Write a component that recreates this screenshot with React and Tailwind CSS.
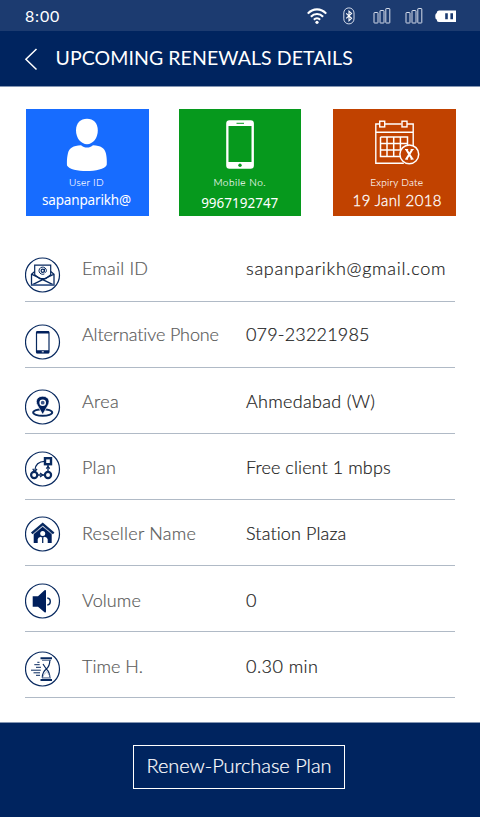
import React from "react";

const SignalIcon = () => (
  <svg width="18" height="18" viewBox="0 0 18 18" fill="none" stroke="#d5dcea" strokeWidth="1">
    <rect x="1" y="5.5" width="4" height="10.5" rx="0.5" />
    <rect x="7" y="3.5" width="4" height="12.5" rx="0.5" />
    <rect x="12.8" y="1.5" width="4" height="14.5" rx="0.5" />
  </svg>
);

const WifiIcon = () => (
  <svg width="20" height="17" viewBox="0 0 20 17" fill="none" stroke="#fff" strokeWidth="2.1">
    <path d="M.8 5.6C6-.1 14-.1 19.200 5.600" />
    <path d="M3.900 8.700c3.400-3.700 8.800-3.700 12.200 0" />
    <path d="M6.900 11.700c1.700-1.900 4.500-1.900 6.200 0" />
    <circle cx="10" cy="14.300" r="1.600" fill="#fff" stroke="none" />
  </svg>
);

const BluetoothIcon = () => (
  <svg width="12" height="18" viewBox="0 0 12 18" fill="none" stroke="#fff">
    <rect x=".8" y=".9" width="10.200" height="16" rx="5" stroke="#d5dcea" strokeWidth="1" />
    <path d="M3.200 6.300l5.400 5L6 13.700V4.100l2.600 2.300-5.400 5" strokeWidth="1.100" />
  </svg>
);

const BatteryIcon = () => (
  <svg width="22" height="13" viewBox="0 0 22 13">
    <path d="M4 .5h17v11.500H4Q1.700 12 1.700 9.500 .3 9 .3 7V5.500Q.3 3.500 1.700 3 1.700 .5 4 .5z" fill="#fff" />
    <path d="M10.200 3.200h2.600v6h-2.600zM15.400 3.200h2.600v6h-2.600z" fill="#1c3b70" />
  </svg>
);

const UserIcon = () => (
  <svg width="42" height="54" viewBox="0 0 42 54" fill="#fff">
    <path d="M21 .8C14.500 .8 10 5 10 12.500 10 20 15 26.200 21 26.200S31.800 20 31.800 12.500C31.800 5 27.500 .8 21 .8z" />
    <path d="M15 27.200c3.500 3.100 8.500 3.100 12 0 8 .3 11.500 2.800 12.800 7.800 .9 3.500 1.200 8 .9 12C37 55 5 55 1 47.500c-.3-4.500 .1-9 1-12.500 1.300-5 5-7.500 13-7.800z" />
  </svg>
);

const BigPhoneIcon = () => (
  <svg width="28" height="49" viewBox="0 0 28 49">
    <path fillRule="evenodd" fill="#fff" d="M3.500 .3h21A3.300 3.300 0 0 1 27.900 3.500v42a3.300 3.300 0 0 1-3.300 3.200h-21A3.300 3.300 0 0 1 .2 45.500v-42A3.300 3.300 0 0 1 3.500 .3zM2.500 6h23v36h-23z" />
    <path d="M10.500 3.300h7.500" stroke="#06991d" strokeWidth="1" />
    <circle cx="14" cy="45.300" r="1.700" fill="#06991d" />
  </svg>
);

const CalendarIcon = () => (
  <svg width="46" height="46" viewBox="0 0 46 46" fill="none" stroke="#fff" strokeWidth="1.400">
    <path d="M5.500 4H1.800v39.200h28M10.500 4H27.500M33 4h6.200v24M1.800 12.300h37.400" />
    <rect x="5.700" y="1.200" width="5" height="5.700" />
    <rect x="28" y="1.200" width="5" height="5.700" />
    <path d="M6.500 17h27v12M6.500 17v19.500h20M6.500 23.500h27M6.500 30h21M13 17v19.500M19.700 17v19.500M26.400 17v13" strokeWidth="1.500" />
    <circle cx="35.300" cy="34.300" r="9.400" fill="#c14200" strokeWidth="1.500" />
    <path d="M32.300 29.500l6 9.600M38.300 29.500l-6 9.600" strokeWidth="2" />
    <path d="M31 29.500h3.200M36.700 29.500h3M31 39.100h3M36.500 39.100h3.200" strokeWidth="1" />
  </svg>
);

const Ring = ({ children }) => (
  <svg width="36" height="36" viewBox="0.5 0 36 36" fill="none" stroke="#08295f">
    <circle cx="18" cy="18" r="17" strokeWidth="1.200" />
    {children}
  </svg>
);

const MailGlyph = () => (
  <Ring>
    <path d="M10.200 8.200h16v9.500l-5 4h-6l-5-4z" strokeWidth="1.200" />
    <path d="M10.200 14.500L7 17.200v11h22.500v-11l-3.300-2.700M7 17.200l22.500 11M29.500 17.200L7 28.200" strokeWidth="1.300" />
    <path d="M7 28h22.500" stroke="#526d9b" strokeWidth="1.500" />
    <circle cx="18.200" cy="13.700" r="1.600" strokeWidth="1.200" />
    <path d="M20 11.700v3c.2 1.200 1.900 .8 1.900-1a3.700 3.600 0 1 0-2 3.200" strokeWidth="1" />
  </Ring>
);

const PhoneGlyph = () => (
  <Ring>
    <rect x="12" y="7.500" width="12.500" height="21.500" rx="1" stroke="#08295f" strokeWidth="1.200" />
    <path d="M12 7.200h12.500v2.300H12zM12 26.300h12.500v3H12z" fill="#001f5c" stroke="none" />
    <path d="M17.300 27.800h2" stroke="#fff" />
  </Ring>
);

const AreaGlyph = () => (
  <Ring>
    <ellipse cx="18.200" cy="23.500" rx="9.500" ry="3.300" strokeWidth="2" />
    <path d="M18.200 25.500l-5-8.700C9.500 10.500 14 7.200 18.200 7.200s8.700 3.300 5 9.600z" fill="#001f5c" stroke="#fff" strokeWidth=".7" />
    <circle cx="18.200" cy="13.700" r="2.600" fill="#3b568b" stroke="#fff" strokeWidth="1.400" />
  </Ring>
);

const PlanGlyph = () => (
  <Ring>
    <path d="M10.300 19.500C10.500 14 14.500 10.300 20 10.300M23.500 14v6M13.500 24h7" strokeWidth="1.300" />
    <path d="M8.300 17.800l1.700 3 2.500-2.800M15.500 22l2.800 2-2.800 2M21.800 17.700l1.700-2.200 1.700 2.200" strokeWidth="1.300" />
    <rect x="20.500" y="7.200" width="6" height="6" strokeWidth="2.400" />
    <circle cx="9.700" cy="24" r="3.100" strokeWidth="2.200" />
    <circle cx="23.500" cy="24" r="3.100" strokeWidth="2.200" />
  </Ring>
);

const HouseGlyph = () => (
  <Ring>
    <path d="M9.200 17.200l9-7 9 7v9.800H9.200z" fill="#001f5c" stroke="none" />
    <path d="M7.200 17.300l11-9.300 11 9.300" strokeWidth="2.300" />
    <path d="M9.300 17.800l8.900-7.300 8.900 7.300" stroke="#fff" strokeWidth=".6" />
    <circle cx="18.200" cy="17.400" r="2.500" fill="#fff" stroke="none" />
    <path d="M13.200 27.200v-4q.2-1.700 3-2.400l2 1.200 2-1.200q2.800 .7 3 2.400v4z" fill="#fff" stroke="none" />
    <path d="M18.200 22v5" strokeWidth="1.300" />
  </Ring>
);

const VolumeGlyph = () => (
  <Ring>
    <path d="M8.200 13.300h5.300L20 7.300q1.500-.8 1.500 .8v20.500q0 1.500-1.500 .7l-6.500-5.500H8.200z" fill="#001f5c" stroke="none" />
    <path d="M22.800 15c4 .5 4 6.500 0 7" strokeWidth="1.400" />
  </Ring>
);

const TimeGlyph = () => (
  <Ring>
    <path d="M16 7.200h11.500M16 29h11.500" strokeWidth="2" />
    <path d="M17.500 9.300h9M17.500 27h9" strokeWidth=".7" />
    <path d="M25.300 9.500c0 5-1 6.500-3.500 8.500 2.500 2 3.500 4.500 3.500 8.800M18.500 13l3.300 5c-2.500 2-4 4-4 8.700" strokeWidth="1.200" />
    <path d="M18.300 26.500c1-4 3-4.500 3.800-5.800 .7 1.500 3 2.300 3.500 5.800z" stroke="#8797b5" strokeWidth=".7" />
    <path d="M12.800 11.300H15M9.800 13.700h5.400M11.500 16.300h5M6.500 19.200h9.800M9 21.800h6.500M11.500 24.300h4" strokeWidth="1" />
  </Ring>
);

const cards = [
  {
    Icon: UserIcon, label: "User ID", value: "sapanparikh@",
    box: "ml-[26px] w-[123px] bg-[#176cff]", pic: "pt-[9px] pr-[2px] h-[66px]",
    labelCls: "tracking-[0.3px] pr-[2px]", valueCls: "font-['Noto_Sans',sans-serif] text-[13.500px] tracking-[-0.150px] pr-[2px]",
  },
  {
    Icon: BigPhoneIcon, label: "Mobile No.", value: "9967192747",
    box: "ml-[29.500px] w-[122.500px] bg-[#06991d]", pic: "pt-[11px] h-[66px]",
    labelCls: "tracking-[0.5px]", valueCls: "font-['Noto_Sans',sans-serif] text-[13.5px] tracking-[0px] mt-[3px]",
  },
  {
    Icon: CalendarIcon, label: "Expiry Date", value: "19 Janl 2018",
    box: "ml-[32px] w-[122.500px] bg-[#c14200]", pic: "pt-[11px] pl-[5px] h-[66px]",
    labelCls: "tracking-[0.25px] pl-[5px]", valueCls: "text-[15px] font-light [-webkit-text-stroke:0.3px] tracking-[0.4px] pl-[6px]",
  },
];

const rows = [
  { Icon: MailGlyph, label: "Email ID", value: "sapanparikh@gmail.com", icon: "pt-[20.5px]", l: "pt-[20px] tracking-[0.2px]", v: "pt-[20px] tracking-[0.740px]" },
  { Icon: PhoneGlyph, label: "Alternative Phone", value: "079-23221985", icon: "pt-[22px]", l: "pt-[20px] tracking-[-0.120px]", v: "pt-[20px] tracking-[0.180px]" },
  { Icon: AreaGlyph, label: "Area", value: "Ahmedabad (W)", icon: "pt-[20.5px]", l: "pt-[21px] tracking-[0.350px]", v: "pt-[21px] tracking-[0.320px]" },
  { Icon: PlanGlyph, label: "Plan", value: "Free client 1 mbps", icon: "pt-[17px]", l: "pt-[21px] tracking-[0.3px]", v: "pt-[21px] tracking-[0.1px]" },
  { Icon: HouseGlyph, label: "Reseller Name", value: "Station Plaza", icon: "pt-[16px]", l: "pt-[21px] tracking-[0.250px]", v: "pt-[21px] tracking-[0.130px]" },
  { Icon: VolumeGlyph, label: "Volume", value: "0", icon: "pt-[17px]", l: "pt-[22px] tracking-[0.1px]", v: "pt-[22px]" },
  { Icon: TimeGlyph, label: "Time H.", value: "0.30 min", icon: "pt-[18.5px]", l: "pt-[22px] tracking-[0px]", v: "pt-[22px] tracking-[0.450px]" },
];

export default function App() {
  return (
    <div className="flex h-[817px] w-[480px] flex-col overflow-hidden bg-white font-[Lato,sans-serif] whitespace-nowrap [font-variant-ligatures:none]">
      <div className="flex h-[31px] shrink-0 bg-[#1c3b70] pl-[25px] text-white">
        <span className="w-[282px] pt-[6px] text-[16px] leading-[20px] tracking-[0.8px]">8:00</span>
        <div className="flex items-start">
          <div className="pt-[8px]"><WifiIcon /></div>
          <div className="ml-[16px] pt-[7px]"><BluetoothIcon /></div>
          <div className="ml-[18px] pt-[7px]"><SignalIcon /></div>
          <div className="ml-[14px] pt-[7px]"><SignalIcon /></div>
          <div className="ml-[12px] pt-[10px]"><BatteryIcon /></div>
        </div>
      </div>
      <header className="flex h-[55px] shrink-0 bg-[#00245f] pl-[24px] text-white">
        <svg className="mt-[16px]" width="14" height="24" viewBox="0 0 14 24" fill="none" stroke="#fff" strokeWidth="1.500">
          <path d="M12.500 2L1.900 12.300 12.500 22.500" />
        </svg>
        <h1 className="ml-[17.5px] pt-[15px] text-[19.500px] leading-[24px] font-normal tracking-[0.080px]">UPCOMING RENEWALS DETAILS</h1>
      </header>
      <div className="h-px shrink-0 bg-[#8496b3]" />
      <section className="mt-[22px] flex h-[107px] shrink-0">
        {cards.map(({ Icon, label, value, box, pic, labelCls, valueCls }) => (
          <div key={label} className={`flex flex-col items-center text-white ${box}`}>
            <div className={pic}><Icon /></div>
            <span className={`text-[10px] leading-[15px] font-light [-webkit-text-stroke:0.1px] ${labelCls}`}>{label}</span>
            <span className={`leading-[20px] ${valueCls}`}>{value}</span>
          </div>
        ))}
      </section>
      <section className="mx-[25px] mt-[20px] w-[430px] shrink-0">
        {rows.map(({ Icon, label, value, icon, l, v }) => (
          <div key={label} className="flex h-[66px] border-b border-[#b0bac6] text-[18px] leading-[24px] [-webkit-text-stroke:0.2px]">
            <div className={`w-[57px] ${icon}`}><Icon /></div>
            <span className={`w-[164px] font-light text-[#5a5a5a] ${l}`}>{label}</span>
            <span className={`font-light text-[#1c1c1c] ${v}`}>{value}</span>
          </div>
        ))}
      </section>
      <footer className="mt-auto flex h-[95px] justify-center border-t border-[#8496b3] bg-[#00245f] pt-[22px]">
        <button className="mr-[2px] h-[44px] w-[212px] border border-white pb-[3px] text-[20px] leading-[39px] font-light tracking-[-0.050px] text-white [-webkit-text-stroke:0.2px]">
          Renew-Purchase Plan
        </button>
      </footer>
    </div>
  );
}
